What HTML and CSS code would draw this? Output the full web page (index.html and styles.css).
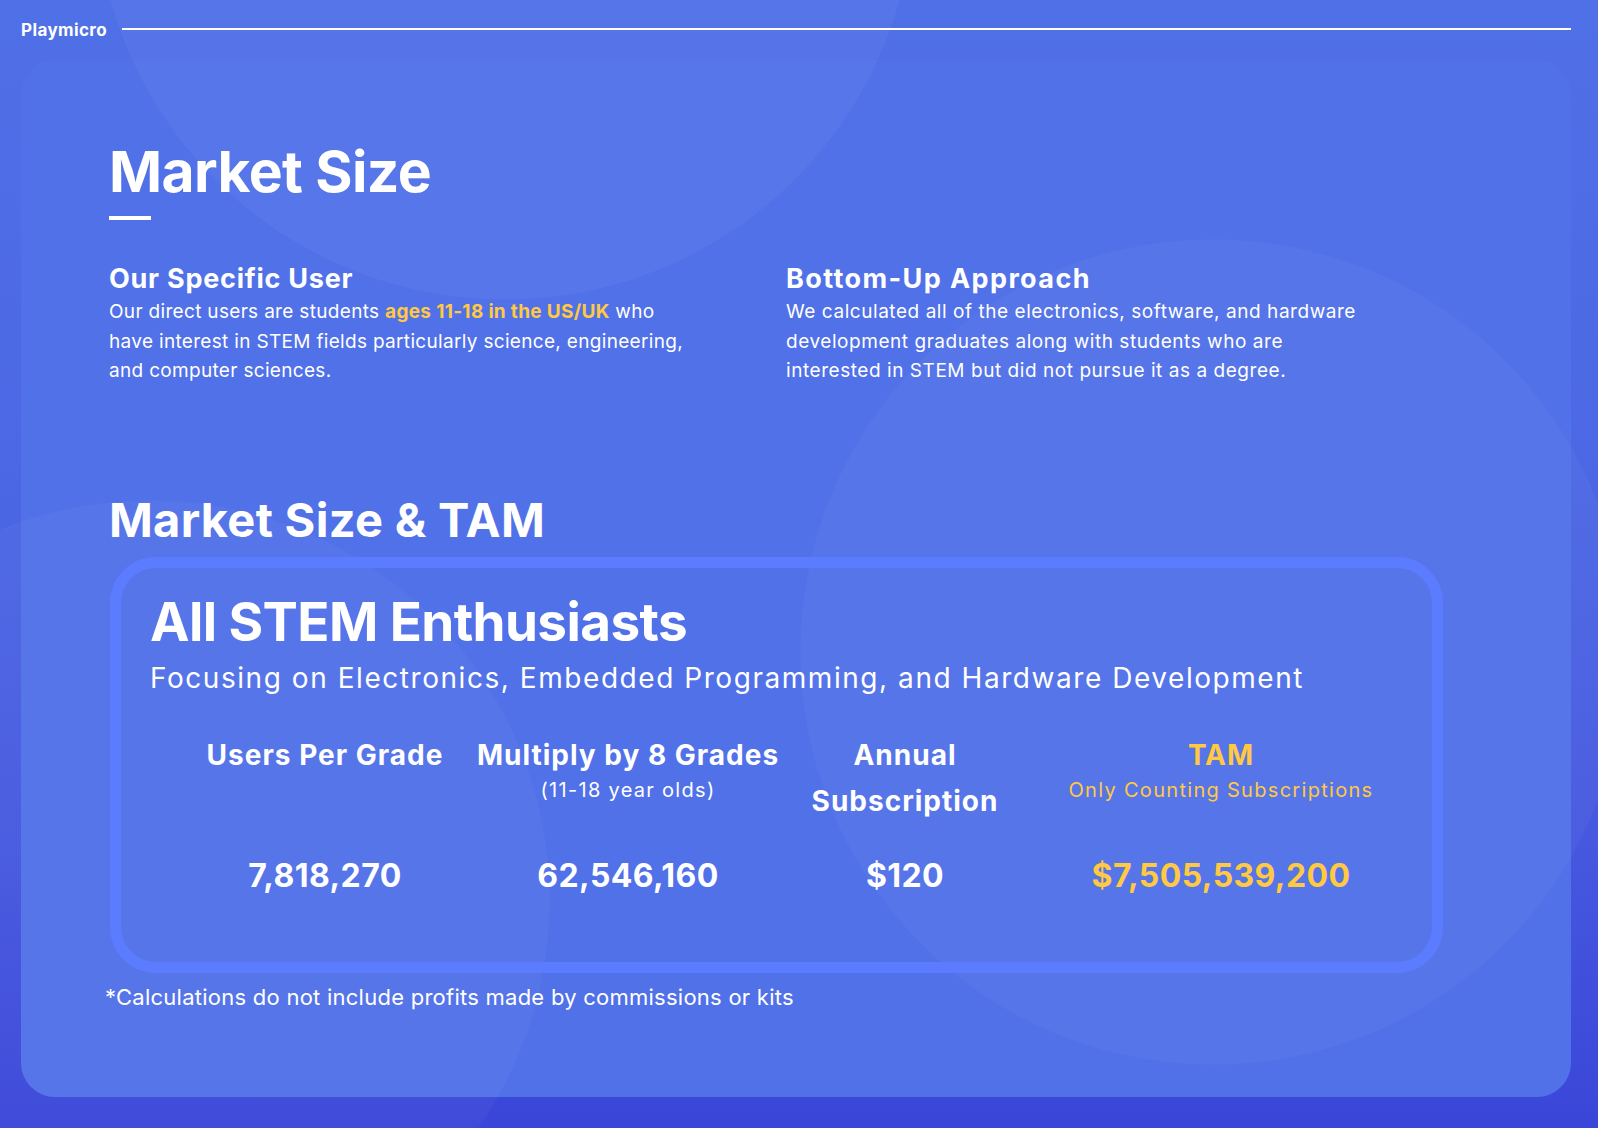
FILE: index.html
```html
<!DOCTYPE html>
<html lang="en">
<head>
<meta charset="utf-8">
<title>Playmicro – Market Size</title>
<link rel="stylesheet" href="styles.css">
</head>
<body>
<div class="page">
  <header class="topbar">
    <span class="brand">Playmicro</span>
    <span class="rule"></span>
  </header>
  <main class="card">
    <h1 class="title">Market Size</h1>
    <div class="title-bar"></div>
    <section class="cols">
      <div class="col">
        <h2 class="col-head">Our Specific User</h2>
        <p class="col-text">Our direct users are students <strong class="hl">ages 11-18 in the US/UK</strong> who<br>have interest in STEM fields particularly science, engineering,<br>and computer sciences.</p>
      </div>
      <div class="col">
        <h2 class="col-head wide">Bottom-Up Approach</h2>
        <p class="col-text wide">We calculated all of the electronics, software, and hardware<br>development graduates along with students who are<br>interested in STEM but did not pursue it as a degree.</p>
      </div>
    </section>
    <h2 class="section-title">Market Size &amp; TAM</h2>
    <section class="tam-box">
      <h3 class="tam-title">All STEM Enthusiasts</h3>
      <p class="tam-sub">Focusing on Electronics, Embedded Programming, and Hardware Development</p>
      <div class="metrics">
        <div class="m-cell">
          <div class="m-head">Users Per Grade</div>
        </div>
        <div class="m-cell">
          <div class="m-head">Multiply by 8 Grades</div>
          <div class="m-sub">(11-18 year olds)</div>
        </div>
        <div class="m-cell">
          <div class="m-head">Annual<br>Subscription</div>
        </div>
        <div class="m-cell accent">
          <div class="m-head">TAM</div>
          <div class="m-sub">Only Counting Subscriptions</div>
        </div>
        <div class="m-value">7,818,270</div>
        <div class="m-value">62,546,160</div>
        <div class="m-value">$120</div>
        <div class="m-value accent">$7,505,539,200</div>
      </div>
    </section>
    <p class="footnote">*Calculations do not include profits made by commissions or kits</p>
  </main>
</div>
</body>
</html>
```

FILE: styles.css
```css
* {
  box-sizing: border-box;
}

html, body {
  margin: 0;
  padding: 0;
}

body {
  font-family: "Inter", "Lato", "Liberation Sans", sans-serif;
  color: #ffffff;
  background-color: #4559df;
}

.page {
  width: 1598px;
  height: 1128px;
  overflow: hidden;
  background:
    radial-gradient(circle 410px at 505px -110px, rgba(255, 255, 255, 0.035) 409px, rgba(255, 255, 255, 0) 410px),
    radial-gradient(circle 413px at 1213px 652px, rgba(255, 255, 255, 0.03) 412px, rgba(255, 255, 255, 0) 413px),
    radial-gradient(circle 400px at 150px 900px, rgba(255, 255, 255, 0.03) 399px, rgba(255, 255, 255, 0) 400px),
    linear-gradient(180deg, #5070e7 0%, #4c68e4 40%, #4558df 75%, #3a46d8 100%);
}

.topbar {
  height: 60px;
  display: flex;
  align-items: center;
  gap: 15px;
  padding: 0 27px 0 21px;
}

.brand {
  font-weight: 700;
  font-size: 17px;
  letter-spacing: 0.4px;
  line-height: 1;
}

.rule {
  flex: 1;
  height: 2px;
  margin-top: -2px;
  background: #ffffff;
}

.card {
  margin-left: 21px;
  width: 1550px;
  height: 1037px;
  border-radius: 34px;
  padding: 83px 0 0 88px;
  background:
    radial-gradient(circle 410px at 484px -170px, rgba(255, 255, 255, 0.035) 409px, rgba(255, 255, 255, 0) 410px),
    radial-gradient(circle 413px at 1192px 592px, rgba(255, 255, 255, 0.03) 412px, rgba(255, 255, 255, 0) 413px),
    radial-gradient(circle 400px at 129px 840px, rgba(255, 255, 255, 0.03) 399px, rgba(255, 255, 255, 0) 400px),
    #5171e8;
}

.title {
  margin: 0;
  font-size: 57px;
  font-weight: 700;
  letter-spacing: -0.6px;
  line-height: 1;
}

.title-bar {
  margin-top: 16px;
  width: 42px;
  height: 4px;
  background: #ffffff;
}

.cols {
  margin-top: 45px;
  display: grid;
  grid-template-columns: 590px 640px;
  column-gap: 87px;
}

.col-head {
  margin: 0;
  font-size: 27px;
  font-weight: 700;
  letter-spacing: 0.75px;
  line-height: 1;
}

.col-head.wide {
  letter-spacing: 1.4px;
}

.col-text {
  margin: 5px 0 0;
  font-size: 19px;
  line-height: 29.5px;
  letter-spacing: 0.32px;
  white-space: nowrap;
}

.col-text.wide {
  letter-spacing: 0.55px;
}

.hl {
  color: #ffc942;
  font-weight: 700;
}

.section-title {
  margin: 110px 0 0;
  font-size: 47px;
  font-weight: 700;
  letter-spacing: 0.3px;
  line-height: 1;
}

.tam-box {
  margin: 14px 0 0 1px;
  width: 1333px;
  border: 11px solid #5b7cff;
  border-radius: 46px;
  padding: 28px 0 70px 29px;
}

.tam-title {
  margin: 0;
  font-size: 53px;
  font-weight: 700;
  letter-spacing: -0.6px;
  line-height: 1;
}

.tam-sub {
  margin: 15px 0 0;
  font-size: 28px;
  font-weight: 400;
  letter-spacing: 1.55px;
  line-height: 1;
}

.metrics {
  margin: 40px 0 0 30px;
  display: grid;
  grid-template-columns: 290px 316px 238px 394px;
  row-gap: 36px;
  align-items: start;
  text-align: center;
}

.m-head {
  font-size: 28px;
  font-weight: 700;
  letter-spacing: 1px;
  line-height: 46px;
}

.m-sub {
  margin-top: 2px;
  font-size: 20px;
  letter-spacing: 1.3px;
  line-height: 1;
}

.m-value {
  font-size: 32px;
  font-weight: 700;
  letter-spacing: 0.4px;
  line-height: 1;
}

.accent {
  color: #ffc942;
}

.footnote {
  margin: 13px 0 0 -4px;
  font-size: 22px;
  letter-spacing: 0.25px;
  line-height: 1;
}
```
